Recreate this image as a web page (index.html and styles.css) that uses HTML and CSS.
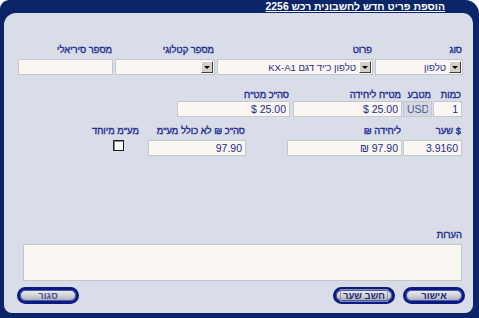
FILE: index.html
```html
<!DOCTYPE html>
<html dir="rtl">
<head>
<meta charset="utf-8">
<title>הוספת פריט</title>
<link rel="stylesheet" href="styles.css">
</head>
<body>
<div class="window">
    <div class="title">הוספת פריט חדש לחשבונית רכש 2256</div>
    <main class="panel">
        <div class="row row-top">
            <div class="col w-type">
                <label class="lbl">סוג</label>
                <div class="combo"><span class="combo-btn"></span><span class="combo-text">טלפון</span></div>
            </div>
            <div class="col w-desc">
                <label class="lbl">פרוט</label>
                <div class="combo"><span class="combo-btn"></span><span class="combo-text">טלפון כ'יד דגם KX-A1</span></div>
            </div>
            <div class="col w-cat">
                <label class="lbl">מספר קטלוגי</label>
                <div class="combo"><span class="combo-btn"></span><span class="combo-text"></span></div>
            </div>
            <div class="col w-serial">
                <label class="lbl">מספר סיריאלי</label>
                <input class="field" type="text">
            </div>
        </div>

        <div class="row row-fx">
            <div class="col w-qty">
                <label class="lbl">כמות</label>
                <input class="field" type="text" value="1" dir="ltr">
            </div>
            <div class="col w-cur">
                <label class="lbl">מטבע</label>
                <input class="field readonly" type="text" value="USD" dir="ltr" readonly>
            </div>
            <div class="col w-unit">
                <label class="lbl">מט"ח ליחידה</label>
                <input class="field" type="text" value="$ 25.00" dir="ltr">
            </div>
            <div class="col w-total">
                <label class="lbl">סה"כ מט"ח</label>
                <input class="field" type="text" value="$ 25.00" dir="ltr">
            </div>
        </div>

        <div class="row row-ils">
            <div class="col w-rate">
                <label class="lbl">$ שער</label>
                <input class="field" type="text" value="3.9160" dir="ltr">
            </div>
            <div class="col w-ils">
                <label class="lbl">ליחידה ₪</label>
                <input class="field" type="text" value="₪ 97.90" dir="ltr">
            </div>
            <div class="col w-ils-total">
                <label class="lbl">סה"כ ₪ לא כולל מע"מ</label>
                <input class="field" type="text" value="97.90" dir="ltr">
            </div>
            <div class="col w-vat">
                <label class="lbl">מע"מ מיוחד</label>
                <input class="check" type="checkbox">
            </div>
        </div>

        <label class="lbl notes-lbl">הערות</label>
        <textarea class="notes"></textarea>

        <div class="buttons">
            <button class="pill">אישור</button>
            <button class="pill focused"><span>חשב שער</span></button>
            <button class="pill close">סגור</button>
        </div>
    </main>
</div>
</body>
</html>
```

FILE: styles.css
```css
body {
    margin: 0;
    font-family: "Liberation Sans", Arial, sans-serif;
    background: #ffffff;
}

.window {
    width: 479px;
    height: 318px;
    box-sizing: border-box;
    background: #0c2468;
    border-radius: 9px 14px 0 0;
    padding: 0 6px 5px 4px;
    display: flex;
    flex-direction: column;
}

.title {
    height: 13px;
    line-height: 14px;
    padding-right: 28px;
    color: #ffffff;
    font-size: 10.4px;
    font-weight: bold;
    text-decoration: underline;
    white-space: nowrap;
}

.panel {
    flex: 1;
    background: #d9dde8;
    border-radius: 12px 10px 8px 8px;
    padding: 31px 10px 0 14px;
    display: flex;
    flex-direction: column;
}

.row {
    display: flex;
}

.col {
    display: flex;
    flex-direction: column;
}

.lbl {
    height: 12px;
    line-height: 12px;
    padding-right: 1px;
    margin-bottom: 3px;
    font-size: 9.4px;
    color: #1b2a92;
    text-align: right;
    white-space: nowrap;
    -webkit-text-stroke: 0.35px #1b2a92;
}

/* row 1 */
.row-top {
    gap: 2px;
}

.w-type { width: 88px; }
.w-desc { width: 156px; }
.w-cat { width: 100px; }
.w-serial { width: 95px; }

/* row 2 */
.row-fx {
    margin: 14px 1px 0 0;
    gap: 1px;
}

.row-fx .lbl {
    margin-bottom: 0;
}

.w-qty { width: 29px; }
.w-cur { width: 29px; }
.w-unit { width: 109px; margin-left: 2px; }
.w-total { width: 113px; }

/* row 3 */
.row-ils {
    margin: 8px 1px 0 0;
    gap: 1px;
}

.w-rate { width: 59px; }
.w-ils { width: 115px; margin-left: 40px; }
.w-ils-total { width: 98px; margin-left: 2px; }
.w-vat { width: 53px; align-items: center; }
.w-vat .lbl { align-self: flex-end; }

.field,
.combo,
.notes {
    box-sizing: border-box;
    height: 16px;
    margin: 0;
    border: 1px solid #c3c7d0;
    background: #faf6f1;
    font-family: inherit;
    font-size: 10.5px;
    color: #1f2c8f;
}

.field {
    width: 100%;
    padding: 0 3px;
    text-align: right;
    outline: none;
}

.field.readonly {
    background: #d3d8e3;
    color: #4a5a94;
    text-align: center;
}

.combo {
    display: flex;
    align-items: center;
    padding: 0 1px;
    gap: 3px;
    overflow: hidden;
}

.combo-btn {
    flex: none;
    width: 12px;
    height: 12px;
    box-sizing: border-box;
    background: #d4d0c8;
    border: 1px solid;
    border-color: #ffffff #404040 #404040 #ffffff;
    display: flex;
    align-items: center;
    justify-content: center;
}

.combo-btn::after {
    content: "";
    border-left: 3px solid transparent;
    border-right: 3px solid transparent;
    border-top: 3px solid #000000;
}

.combo-text {
    font-size: 9.6px;
    white-space: nowrap;
}

.check {
    appearance: none;
    width: 11px;
    height: 11px;
    margin: 0;
    background: #ffffff;
    border: 1px solid #202020;
    box-shadow: inset 1px 1px 0 #8a8a8a;
}

/* notes */
.notes-lbl {
    margin-top: 73px;
}

.notes {
    height: 37px;
    margin: 0 1px 0 5px;
    resize: none;
}

/* buttons */
.buttons {
    display: flex;
    gap: 8px;
    margin: 6px -2px 0 -1px;
}

.pill {
    width: 62px;
    height: 17px;
    box-sizing: border-box;
    padding: 0;
    border: 3px solid #0a1a80;
    border-radius: 9px;
    box-shadow: inset 0 0 0 1px #4757b8;
    background: linear-gradient(#f2f2f4, #d2d3d8 50%, #a8aab3);
    font-family: inherit;
    font-size: 9.5px;
    font-weight: bold;
    line-height: 10px;
    color: #1e2a6e;
    cursor: pointer;
}

.focused span {
    padding: 0 2px;
    border: 1px solid #8a8ea2;
}

.close {
    margin-right: auto;
    color: #4a5480;
}
```
